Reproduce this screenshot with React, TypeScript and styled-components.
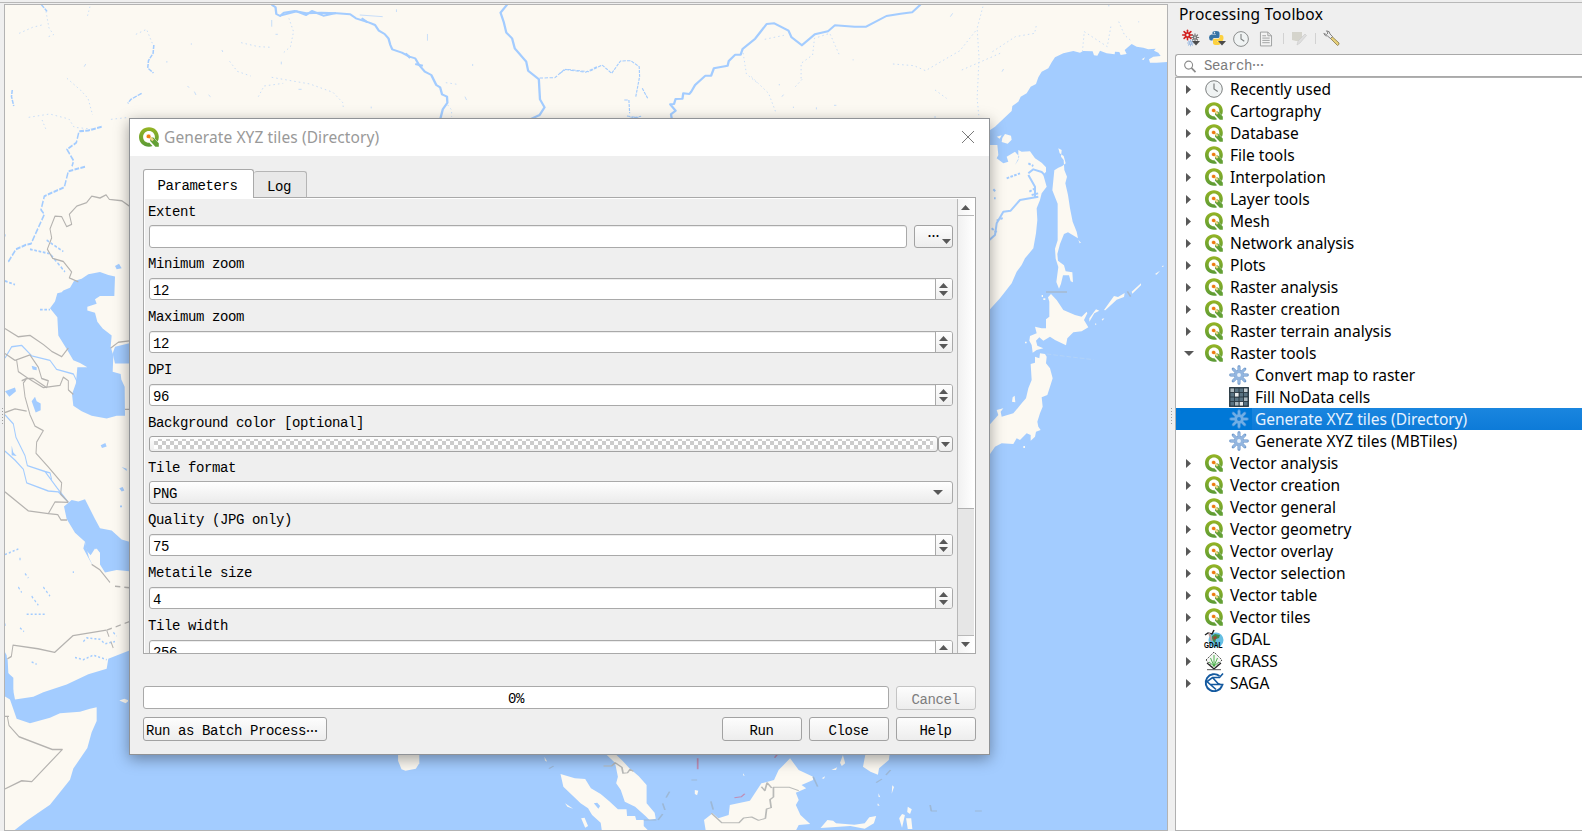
import React from "react";
import styled, { createGlobalStyle } from "styled-components";

const UI = `"Noto Sans", "Open Sans", "Noto Sans CJK SC", sans-serif`;
const MONO = `"Liberation Mono", "Noto Sans CJK SC", monospace`;
const LINE = "#a9a9a9";
const SEA = "#a3ccff";
const LAND = "#fcf9f2";

const Global = createGlobalStyle`
  * { box-sizing: border-box; }
  body { margin: 0; background: #efefef; overflow: hidden; }
  svg { display: block; overflow: visible; }
`;

const Screen = styled.div`
  width: 1582px;
  height: 831px;
  padding-top: 2px;
  overflow: hidden;
  background: #efefef;
  font-family: ${UI};
`;

const Workspace = styled.div`
  display: flex;
  height: 829px;
  border-top: 1px solid #b8b8b8;
`;

const Gutter = styled.div<{ $w: number }>`
  width: ${(p) => p.$w}px;
  flex: none;
  display: flex;
  align-items: center;
  justify-content: center;
  padding-bottom: 2px;
`;

const Grip = styled.div`
  width: 1px;
  height: 16px;
  background: repeating-linear-gradient(#a0a0a0 0 1px, transparent 1px 3px);
`;

const MapCanvas = styled.div`
  width: 1164px;
  height: 827px;
  margin-top: 1px;
  flex: none;
  border: 1px solid #b3b3b3;
  overflow: hidden;
  background: ${LAND};
  & > svg { overflow: hidden; }
`;

/* ---------- Toolbox panel ---------- */

const Toolbox = styled.div`
  flex: 1;
  min-width: 0;
  display: flex;
  flex-direction: column;
`;

const PanelTitle = styled.div`
  height: 24px;
  padding-left: 4px;
  font-size: 15.5px;
  line-height: 23px;
  letter-spacing: 0.22px;
  color: #000;
`;

const ToolRow = styled.div`
  height: 27px;
  display: flex;
  align-items: center;
  padding: 0 0 4px 7px;
`;

const ToolSlot = styled.div<{ $w: number }>`
  width: ${(p) => p.$w}px;
  flex: none;
  display: flex;
`;

const ToolSeparator = styled.div`
  width: 1px;
  height: 11px;
  background: #d2d2d2;
`;

const SearchBox = styled.div`
  height: 23px;
  display: flex;
  align-items: center;
  gap: 8px;
  padding: 1px 0 0 8px;
  border: 1px solid ${LINE};
  border-right: 0;
  border-radius: 3px 0 0 3px;
  background: #fff;
  color: #7c7c7c;
  font: 14px/20px ${MONO};
  letter-spacing: -0.4px;
`;

const Tree = styled.div`
  height: 754px;
  border: 1px solid #b0b0b0;
  border-right: 0;
  background: #fff;
`;

const TreeRow = styled.div<{ $child?: boolean; $selected?: boolean }>`
  height: 22px;
  display: flex;
  align-items: center;
  padding-left: ${(p) => (p.$child ? 53 : 9)}px;
  font-size: 15.5px;
  line-height: 22px;
  white-space: nowrap;
  color: ${(p) => (p.$selected ? "#e6f2ff" : "#000")};
  background: ${(p) =>
    p.$selected ? "linear-gradient(90deg, #0078d7 0 76px, transparent 76px), linear-gradient(#1a86df, #0d7bd8)" : "transparent"};
`;

const Twist = styled.div<{ $open?: boolean }>`
  width: 19px;
  flex: none;
  padding-left: ${(p) => (p.$open ? 0 : 1)}px;
  margin-left: ${(p) => (p.$open ? -1 : 0)}px;
  margin-right: ${(p) => (p.$open ? 1 : 0)}px;
`;

const TreeIcon = styled.div`
  width: 20px;
  margin-right: 6px;
  flex: none;
  display: flex;
  justify-content: center;
`;

/* ---------- Dialog ---------- */

const Dialog = styled.div`
  position: absolute;
  left: 129px;
  top: 118px;
  width: 861px;
  height: 637px;
  border: 1px solid #8f9296;
  background: #efefef;
  box-shadow: 0 4px 14px rgba(0, 0, 0, 0.36);
  font-family: ${MONO};
  font-size: 14px;
  letter-spacing: -0.4px;
  color: #000;
`;

const TitleBar = styled.div`
  height: 37px;
  display: flex;
  align-items: center;
  padding: 0 15px 2px 9px;
  background: #fff;
`;

const DialogTitle = styled.div`
  flex: 1;
  padding-left: 5px;
  font: 15.5px ${UI};
  letter-spacing: 0.1px;
  color: #999;
`;

const Content = styled.div`
  padding: 13px 13px 0;
`;

const Tabs = styled.div`
  display: flex;
  align-items: flex-end;
  height: 29px;
  margin-bottom: -1px;
`;

const Tab = styled.div<{ $active?: boolean }>`
  position: relative;
  width: ${(p) => (p.$active ? 111 : 53)}px;
  height: ${(p) => (p.$active ? 29 : 27)}px;
  padding: 4px 2px 0 0;
  display: flex;
  align-items: center;
  justify-content: center;
  border: 1px solid ${(p) => (p.$active ? LINE : "#b5b5b5")};
  border-bottom: ${(p) => (p.$active ? "0" : `1px solid ${LINE}`)};
  border-left-width: ${(p) => (p.$active ? 1 : 0)}px;
  border-radius: 3px 3px 0 0;
  background: ${(p) => (p.$active ? "#fff" : "#e8e8e8")};
`;

const Pane = styled.div`
  height: 457px;
  display: flex;
  overflow: hidden;
  border: 1px solid ${LINE};
  padding: 1px 0 0 1px;
  background: linear-gradient(#fff 0 1px, transparent 1px), linear-gradient(90deg, #fff 0 1px, #efefef 1px);
`;

const Form = styled.div`
  width: 812px;
  height: 454px;
  overflow: hidden;
  padding: 0 4px;
`;

const Label = styled.div<{ $h: number; $up?: number }>`
  height: ${(p) => p.$h}px;
  display: flex;
  align-items: flex-end;
  padding-bottom: ${(p) => 3 + (p.$up ?? 0)}px;
  margin-left: -1px;
  line-height: 20px;
  white-space: pre;
`;

const Row = styled.div<{ $gap?: number }>`
  display: flex;
  gap: ${(p) => p.$gap ?? 0}px;
`;

const Field = styled.div<{ $h?: number }>`
  flex: 1;
  height: ${(p) => p.$h ?? 22}px;
  display: flex;
  align-items: stretch;
  border: 1px solid ${LINE};
  border-radius: 3px;
  background: #fff;
  box-shadow: inset 0 1px 0 #ededed;
`;

const Value = styled.div`
  flex: 1;
  padding: 2px 0 0 3px;
  line-height: 20px;
`;

const Steps = styled.div`
  width: 17px;
  display: flex;
  flex-direction: column;
  align-items: center;
  justify-content: center;
  gap: 3px;
  padding-right: 1px;
  border-left: 1px solid ${LINE};
  border-radius: 0 2px 2px 0;
  background: linear-gradient(#fefefe, #efefef);
`;

const Button = styled.div<{ $w: number; $h?: number; $disabled?: boolean; $left?: boolean }>`
  width: ${(p) => p.$w}px;
  height: ${(p) => p.$h ?? 24}px;
  flex: none;
  display: flex;
  align-items: center;
  justify-content: ${(p) => (p.$left ? "flex-start" : "center")};
  padding: ${(p) => (p.$left ? "3px 0 0 2px" : "3px 1px 0 0")};
  border: 1px solid ${(p) => (p.$disabled ? "#c4c4c4" : "#a2a2a2")};
  border-radius: 3px;
  background: linear-gradient(#fdfdfd, #ededed);
  color: ${(p) => (p.$disabled ? "#7d7d7d" : "#000")};
  white-space: pre;
`;

const MoreButton = styled(Button)`
  align-items: flex-end;
  justify-content: flex-end;
  padding: 0 1px 3px 0;
`;

const MoreDots = styled.span`
  font: bold 12px/22px "Noto Sans CJK SC", sans-serif;
  height: 19px;
  margin-right: 3px;
`;

const ColorButton = styled(Button)`
  flex: 1;
  padding: 0 4px;
`;

const Checker = styled.div`
  width: 100%;
  height: 10px;
  background: repeating-conic-gradient(#ccc 0 25%, #fff 0 50%) 0 -2px / 8px 8px;
`;

const ArrowButton = styled(Button)`
  padding: 0;
`;

const Combo = styled.div`
  height: 23px;
  display: flex;
  align-items: center;
  padding-right: 9px;
  border: 1px solid ${LINE};
  border-radius: 3px;
  background: linear-gradient(#fefefe, #ebebeb);
`;

const ScrollBar = styled.div`
  width: 18px;
  height: 454px;
  display: flex;
  flex-direction: column;
  border-left: 1px solid #b8b8b8;
  border-right: 1px solid #fff;
  background: #e6e6e6;
`;

const ScrollEnd = styled.div<{ $down?: boolean }>`
  height: ${(p) => (p.$down ? 18 : 17)}px;
  display: flex;
  align-items: center;
  justify-content: center;
  padding-right: 2px;
  border: 0 solid #b8b8b8;
  border-width: ${(p) => (p.$down ? "1px 0 0" : "0 0 1px")};
  background: linear-gradient(90deg, #f4f4f4, #fff);
`;

const Thumb = styled.div`
  height: 293px;
  margin-bottom: 126px;
  border-bottom: 1px solid #b0b0b0;
  background: linear-gradient(90deg, #f1f1f1, #fff);
`;

const Actions = styled.div<{ $top: number }>`
  display: flex;
  gap: 7px;
  margin-top: ${(p) => p.$top}px;
  height: 24px;
`;

const Progress = styled.div`
  flex: 1;
  height: 23px;
  display: flex;
  align-items: center;
  justify-content: center;
  padding-top: 2px;
  border: 1px solid ${LINE};
  border-radius: 3px;
  background: #fff;
`;

const Spacer = styled.div`
  flex: 1;
`;

const Dots = styled.span`
  font: bold 12px/16px "Noto Sans CJK SC", sans-serif;
`;
const Ellipsis = () => <Dots lang="zh-CN">…</Dots>;

/* ---------- Icons ---------- */

const Triangle = ({ dir, w = 9, h = 5 }: { dir: "up" | "down" | "right"; w?: number; h?: number }) => (
  <svg width={w} height={h} viewBox="0 0 10 10" preserveAspectRatio="none">
    <path fill="#585858" d={dir === "up" ? "M5 0L10 10H0Z" : dir === "down" ? "M0 0H10L5 10Z" : "M0 0L10 5L0 10Z"} />
  </svg>
);

const QgisIcon = ({ size = 18 }: { size?: number }) => (
  <svg width={size} height={size} viewBox="0 0 20 20">
    <defs>
      <linearGradient id="qg" x1="0" y1="0" x2="0" y2="1">
        <stop offset="0" stopColor="#95b424" />
        <stop offset="1" stopColor="#5a9a36" />
      </linearGradient>
    </defs>
    <path
      fill="url(#qg)"
      d="M10 0.2C4.3 0.2 0 4.4 0 10s4.300 9.700 10 9.700c1.300 0 2.500-.2 3.500-.6L10.400 15.800C6.700 16 4.100 13.500 4.100 10c0-3.500 2.500-6.100 5.900-6.100s5.900 2.600 5.900 6.100c0 .6-.1 1.100-.2 1.600l2.900 2.900c.8-1.300 1.200-2.800 1.200-4.500C19.800 4.400 15.700 .2 10 .2Z"
    />
    <path fill="#63a035" d="M11.200 10.600h3.200l5.400 5.600v3.600h-3.400l-5.200-5.700Z" />
    <path fill="#f2d48a" d="M7.500 7.500h4v1.800l3.500 3.300-1.700 1.700-3.500-3.400H7.500Z" />
    <circle cx="9.600" cy="9.400" r="1.900" fill="#ee7913" />
  </svg>
);

const ClockIcon = ({ size = 18 }: { size?: number }) => (
  <svg width={size} height={size} viewBox="0 0 18 18" fill="none" stroke="#7d8080">
    <circle cx="9" cy="9" r="8.300" fill="#f0f3f3" />
    <path d="M9 3.500V9l3.700 2.500" strokeWidth="1.200" />
  </svg>
);

const Cog = ({ cx, cy, r, color, hole }: { cx: number; cy: number; r: number; color: string; hole: string }) => (
  <g transform={`translate(${cx} ${cy}) scale(${r / 9})`}>
    {[0, 45, 90, 135].map((a) => (
      <path key={a} d="M0 -9V9" stroke={color} strokeWidth="3" strokeLinecap="round" transform={`rotate(${a})`} />
    ))}
    <circle r="5.300" fill={color} />
    <circle r="2.300" fill={hole} />
  </g>
);

const GearIcon = ({ selected }: { selected?: boolean }) => (
  <svg width="18" height="18" viewBox="0 0 18 18">
    <Cog cx={9} cy={9} r={8.4} color={selected ? "#3f8ed8" : "#6792c6"} hole={selected ? "#0d7bd8" : "#fff"} />
    <Cog cx={9} cy={9} r={7.6} color={selected ? "#70aee6" : "#92b5df"} hole={selected ? "#1a80d8" : "#e9f1fa"} />
  </svg>
);

const GridIcon = () => (
  <svg width="20" height="20" viewBox="0 0 20 20">
    <rect width="20" height="20" fill="#42515b" />
    <g stroke="#22313b" strokeWidth="0.800">
      <path fill="#5a7382" d="M1 1h18v18H1zM5.500 1v18M10 1v18M14.500 1v18M1 5.500h18M1 10h18M1 14.500h18" />
      <path fill="#c6ced2" d="M14.500 1H19v4.500h-4.500z" />
      <path fill="#e9eced" d="M5.500 5.500H10V10H5.500zM10 14.500h4.500V19H10z" />
      <path fill="#a9b6bd" d="M1 1h4.500v4.500H1zM5.500 14.500H10V19H5.500zM14.500 10H19v4.500h-4.500z" />
    </g>
  </svg>
);

const GdalIcon = () => (
  <svg width="20" height="20" viewBox="0 0 20 20">
    <circle cx="12" cy="11" r="7.500" fill="#66bfe3" />
    <path d="M8 7l3-2 5 1-1 3-3 1-1 4-3-3Z" fill="#3f8c4e" />
    <path d="M9 8l3-1 1 2-3 2Z" fill="#9a4a33" />
    <path d="M1 6l3-2 4 1L10 1" fill="none" stroke="#222" strokeWidth="1.500" />
    <path d="M5 4l3 8" stroke="#b9a0a0" strokeWidth="2" />
    <text x="0" y="19" fontFamily="Liberation Sans" fontSize="8.500" fontWeight="bold" textLength="18.500" lengthAdjust="spacingAndGlyphs" fill="#000">
      GDAL
    </text>
  </svg>
);

const GrassIcon = () => (
  <svg width="18" height="20" viewBox="0 0 18 20" fill="none">
    <path d="M1 9L9 1l8 8-8 9Z" fill="#f4f6f2" stroke="#444" strokeDasharray="1.500 1" />
    <path d="M2 12l7 6 7-6" stroke="#222" strokeWidth="1.200" />
    <path d="M9 16V4M9 15L5.500 7M9 15l3.500-8M9 15l-5-4M9 15l5-4" stroke="#3daa3d" strokeWidth="0.900" />
    <path d="M2 18.700h14" stroke="#555" />
  </svg>
);

const SagaIcon = () => (
  <svg width="20" height="20" viewBox="0 0 20 20" fill="none" stroke="#13599f" strokeWidth="1.900">
    <path d="M15.500 3A8.500 8.500 0 1 0 18 13" />
    <path d="M19 .500L15.500 4.500H8.500L3 8.500 12 16.500M8.500 4.500L14 10.500M6.500 11.500H19.500M14 10.500L19 12.500" strokeWidth="1.600" />
  </svg>
);

const ModelIcon = () => (
  <svg width="18" height="17" viewBox="0 0 18 17">
    <Cog cx={5.5} cy={5} r={4.8} color="#d2201f" hole="#efefef" />
    <Cog cx={13} cy={7.5} r={3.6} color="#777" hole="#ddd" />
    <Cog cx={8.5} cy={13} r={3} color="#9dbbe2" hole="#d5e2f3" />
    <path d="M10 11h8l-4 4.500Z" fill="#4c4c4c" />
  </svg>
);

const PythonIcon = () => (
  <svg width="18" height="17" viewBox="0 0 18 17">
    <path d="M3.500 4V2.500Q3.500 1 7 1t3.500 2v3.500Q10.500 8 9 8H5Q3.500 8 3.500 10.500H2Q0 10 0 7.500T2.500 4.600H7V4Z" fill="#3673a5" />
    <path d="M11 5h1.500Q14.500 5 14.500 8T12 11.500H8v.5h3.500v1.500Q11 15 7.500 15T4 13v-3.500Q4 8.700 5.500 8.700h4Q11 8 11 6.500Z" fill="#fcd140" />
    <circle cx="5.500" cy="2.700" r=".7" fill="#fff" />
    <path d="M9 11h8l-4 4.500Z" fill="#4c4c4c" />
  </svg>
);

const PageIcon = () => (
  <svg width="12" height="16" viewBox="0 0 13 16" fill="#f3f3f3" stroke="#9a9c9c">
    <path d="M.5.500h8l4 4v11H.5Z" />
    <path d="M8.500.500v4h4M2.500 4.500h4M2.500 7h8M2.500 9.500h8M2.500 12h8" fill="none" />
  </svg>
);

const EditIcon = () => (
  <svg width="16" height="16" viewBox="0 0 16 16">
    <path d="M1 1h10v9H5l-4-1Z" fill="#d5d4cc" />
    <path d="M6 14l1-4 7-7 1.500 1.500L9 12Z" fill="#dedede" stroke="#cacaca" strokeWidth=".6" />
  </svg>
);

const WrenchIcon = () => (
  <svg width="17" height="17" viewBox="0 0 17 17">
    <path d="M7 8L9 6.500l7 6.500q.6 1.500-1.500 2.500Z" fill="#e8d17a" stroke="#85784a" strokeWidth=".8" />
    <path d="M.8 3.500Q2 6.500 4.500 6l3 2.500L9.500 6.500 7 4Q7 1 3.500.800L5 3 3.500 4.500Z" fill="#ececec" stroke="#777" strokeWidth=".9" />
  </svg>
);

/* ---------- Map drawing ---------- */

const MapDrawing = () => (
  <svg width="1162" height="825" viewBox="5 5 1162 825" fill="none" strokeLinejoin="round">
    <rect x="5" y="5" width="1162" height="825" fill={LAND} />

    {/* Northern rivers */}
    <g transform="scale(.3827 .33333)" stroke={SEA} strokeWidth="4">
      <path d="M710 14L720 22 722 42 732 48 742 38 770 33 800 40 840 38 880 40 915 43 930 55 965 68 980 75 990 92 1005 102 1015 115 1020 135 1025 148 1050 158 1070 170 1085 175 1095 195 1110 215 1127 225 1140 255 1150 262 1155 283 1168 290 1169 308 1157 328 1151 355" strokeWidth="6" />
      <path d="M735 46l40-12 25 11 15-12 30 14 33-8M945 55l15 12M1060 160l12 14M1085 192l20 5" strokeWidth="6" />
      <path d="M1325 14L1308 38 1316 65 1323 98 1338 115 1345 145 1375 185 1380 212 1408 238 1411 298 1423 322 1410 345 1385 358" strokeWidth="6" />
      <path d="M108 14l15 20M402 135l-2 25-12 22-2 22 15 15M370 280l-28 18-8 12M32 270l-2 20 6 28" strokeDasharray="12 3" />
      <path d="M1410 234L1450 233 1475 208 1530 217 1560 200" strokeDasharray="9 4" strokeWidth="3" />
      <g strokeWidth="2.500" strokeDasharray="4 8" opacity=".65">
        <path d="M120 34l8 50 12 20-18 8M50 100l35-18 28-8M355 103l28-15 15 42M630 128l45 12 35 2M755 55l12 40-8 45-20 20M600 184l20 30 35 14M675 290l15-32 50-8M710 232l100 20 60 25 25 30 3 20M175 235l35 35 20 25 12 50M75 352l55-10 50 15 14 25 45 5M110 360l10 28M290 358l40-5M235 20l-8 35M1165 248l30 5M1170 315l10 15v20" />
        <path d="M490 258l4 5M508 275l4 10M580 150l2 6M710 60v20M780 268h8M720 103h6M735 185v8M970 320v5M1117 102v20M1215 290l4 10M1235 192v6M545 285l5 5M940 45l60 5M1036 28v8M500 130v4M436 183v5M220 200l4-8" strokeDasharray="none" />
      </g>
    </g>
    <g transform="translate(560 0) scale(.3827 .33333)" stroke={SEA} strokeWidth="4">
      <path d="M942 14L920 37 890 41 853 48 800 80 770 80 718 76 700 94 666 103 632 136 605 112 597 92 560 70 540 72 510 116 477 147 472 164 458 164 441 183 438 197 402 205 395 227 380 227 353 255 343 275 338 282 322 280 320 296 302 297 298 312 288 313 302 332 290 343 292 356" strokeWidth="6" />
      <path d="M0 220L15 208 75 215 110 195 135 220 158 183 185 182 207 200 208 230 198 290M182 355l30-6M215 265l15 32M168 300h12l2 40M175 348l30 5" strokeDasharray="9 3" strokeWidth="3" />
      <g strokeWidth="2.500" strokeDasharray="4 8" opacity=".65">
        <path d="M535 118l50-12M477 147l10 75 30 28M630 235v-45l30-25 5-50 40-15 25 65M870 192l55 5 30 15 90-60 45-65M1105 20l-15 65 5 90-5 120 5 60M1130 155l60-45 50-10 5-25M1050 210l100-50M1365 155l5-60 60 45 10-65M1460 65l15 40 20 20M500 230l45 50 20 60M615 260l20-25M980 270l30 25" />
        <path d="M573 252v4M580 290l4-6M716 316h6M980 348v8M1155 215l4-8M610 320v4M670 322v6M766 178v3M1020 50l6-10M1434 14v5M1512 64v3" strokeDasharray="none" />
      </g>
    </g>

    {/* Middle East and the Arabian Sea */}
    <g transform="translate(0 120) scale(.33333 .45351)">
      <g fill={SEA}>
        <path d="M150 415L165 400 172 382 185 380 190 376 210 370 222 355 245 350 265 340 300 335 325 342 345 345 343 388 300 388 285 395 290 405 262 412 262 420 285 425 292 445 308 460 335 475 332 500 340 520 338 555 362 560 364 572 374 588 375 652 350 652 320 658 275 652 245 642 220 630 216 605 228 580 232 545 262 545 240 536 220 530 200 505 175 475 172 435Z" />
        <path d="M345 500L388 492V537L345 537 338 515Z" />
        <path d="M192 852L215 838 235 841 255 836 285 880 300 900 335 905 365 925 388 930V995L350 992 315 998 300 980 300 955 285 945 272 960 260 950 255 930 225 910 200 880Z" />
        <path d="M388 1170L325 1188 320 1210 265 1222 200 1245 130 1262 100 1272 45 1278 35 1240 22 1215 20 1180 12 1170V1270L30 1278 50 1320 90 1330 150 1318 180 1308 240 1305 270 1298 290 1295 290 1325 275 1350 262 1385 220 1430 210 1455 150 1510 80 1545 40 1568H430V1170Z" />
        <path d="M95 620l10-10 5 10 12 5v15l-15 5ZM15 598l30-8 3 8-20 12ZM345 322l12-5 8 10-15 2ZM302 717l14-5 4 8-14 3ZM358 812l10-3 5 8-8 2ZM365 765l15 4v5ZM35 718l5 15 10 8-15-2ZM95 542l15 3v7l-12-2ZM15 1180l8 10 2 30 15 10v30l-10 5-15-15ZM255 930l12 35 13 20-15-20-15-20Z" />
      </g>
      <path d="M276 958L290 945 300 955 300 980 285 988 276 975ZM358 1280l15-4 14 4-10 6Z" fill={LAND} />
      <g stroke={SEA} strokeWidth="4.500">
        <path d="M305 15l-40 8-28 2-8 25-28 15 20 25-5 12M255 103l-50 10-12 35-60 20-10 30 10 10-40 65-15 2-30 10-25 30" strokeDasharray="14 4" />
        <path d="M90 285l60 10 45 40M140 265l50 25M15 355l30 8M120 418h30" strokeDasharray="8 5" strokeWidth="4" />
        <path d="M15 650L40 670 48 700 75 740 82 762 135 775 172 812 205 843M15 730L45 750 70 770 80 800 145 818 175 820 205 843M15 525L35 500 65 497 95 520 150 530 170 550 220 560 232 578M135 775l15 3 5 15" strokeWidth="3" />
        <path d="M95 1195l15 5M220 995v4M60 965v8M15 958l40-12M75 1000l10 10M55 1030l10 12M95 1050l20 20M130 1030l20 20M80 1090h60M15 1110v8M60 1120l12 8M250 1150l10-8 40 3 15 10 30-5M225 1185l25 5 30-10 40 10M340 1130l10 8M360 852h10M15 252v5" strokeDasharray="6 6" strokeWidth="3.500" />
      </g>
      <g stroke="#b5b3b0" strokeWidth="3">
        <path d="M388 190L365 178 328 175 318 165 300 172 275 168 260 182 230 190 208 208 215 230 200 235 185 213 165 212 150 240 155 260 142 285 158 305 190 312 215 335 208 348 235 357M332 503L355 490 388 487M375 638h13" />
        <path d="M15 460L55 478 90 475 130 495 155 510 185 522 205 503M15 515L45 530 90 518 115 545 125 570 145 575 140 590 100 570 80 570M50 530l5 25 30 15 45 20 50-5 10-18 15 8v20l15 10" />
        <path d="M65 575L80 570 70 580 75 610 90 650 105 675 130 685 110 710 108 735 145 765 185 800 182 825 205 843M15 645l30-8 35 5M15 820L85 862 145 868 165 842 205 843M145 868l28 2 10 12 18 0" />
        <path d="M275 980l25 12 30 28M22 1188l12-5 5-25 75 8 50 8 55-37 100-12M22 1315l5 20 30 25 100 28 30 0-92 71-30-2-50 18M15 1315h12" />
        <path d="M345 1028l50 4M320 1125l68-19M320 1125l25 50" strokeDasharray="16 12" />
      </g>
    </g>

    {/* Southern sea and islands */}
    <rect x="128" y="700" width="1040" height="131" fill={SEA} />
    <g transform="translate(130 740) scale(.574 .33333)">
      <g fill={LAND}>
        <path d="M467 36V62L473 88 480 92 498 86 504 70V36Z" />
        <path d="M825 36L845 68 850 110 847 130 855 150 862 185 880 200 898 228 905 240 916 236 914 218 900 190V135L886 108 870 85 858 62 842 36Z" />
        <path d="M750 102L775 115 793 117 803 145 820 162 835 184 850 208 865 208 866 228 880 228 882 240 895 240 895 258 903 272H822L820 248 805 225 798 205 785 190 770 165 755 140ZM808 190l8 16 3-8-5-10Z" fillRule="evenodd" />
        <path d="M1003 272L1000 240 1015 220 1025 235 1043 225 1045 195 1080 182 1100 130 1122 120 1130 90 1150 55 1165 90 1190 110 1190 120 1170 135 1178 145 1160 158 1165 180 1160 195 1168 225 1185 252 1165 255 1160 272Z" />
        <path d="M1282 36L1277 80 1290 95 1303 104 1305 85 1322 60 1324 36Z" />
        <path d="M1203 264L1215 240 1225 242 1230 250 1262 254 1280 250 1288 232 1300 228 1296 250 1280 266 1255 258Z" />
        <path d="M722 50l5 15-4-3ZM1242 45l4 25-6 8-3-10ZM758 190l14 16-10-6ZM786 235l6-2 6 25-5 5ZM984 150l6 2-2 14-4-4ZM1328 136l3 5-4 20ZM1355 200l7 8-3 14-5-6ZM1345 222l5 3-5 38-5-28ZM1352 235h9l2 32h-8ZM1304 160l3 12-3-2ZM1222 90l10-8-2 8ZM1303 190l3 8-4-2ZM1068 100l3 8-3-2ZM1205 115l6-6-2 7Z" />
      </g>
      <g stroke="#b9bab8" strokeWidth="3">
        <path d="M825 78h14l6-10 12 14 2 18 8-2 4-10 6 6M1013 220l18 28 30 0 8-14 14-3 12 10 12-6 2-28 8-4-2-24 6-8V142h28l16 10M1100 140l6 12 4-24 8 16" />
        <path d="M940 155l-6 18M928 190l4 20M928 222l-8 18M895 240h22M1012 184l4 25M978 120h10M1325 90l-8 15M1310 117l-10 11M1394 195l2 18h10M1472 213h12M738 78l-8 8M1190 110l8 30" stroke="#9db8d6" />
      </g>
      <path d="M989 55v33M1130 38l-7 15M1053 173l12-3 6-9" stroke="#bf8fb7" strokeWidth="3" />
    </g>

    {/* Okhotsk Sea, Pacific, Sakhalin and Japan */}
    <g transform="translate(980 0) scale(.33333)">
      <path
        fill={SEA}
        d="M564 186L530 188 510 188 507 178 520 170 542 168 535 158 522 152 527 146 505 148 490 143 470 140 455 132 440 145 434 150 440 162 422 165 418 156 405 155 404 163 380 160 360 152 352 167 342 166 338 154 310 153 300 158 280 153 250 160 225 172 215 187 205 205 185 215 175 232 168 252 152 260 140 280 122 290 115 305 97 318 95 333 75 352 45 380 0 410V435H52L55 465 50 475 70 490 85 485 80 470 105 455 118 470 105 495 115 480 115 450 125 455 150 454 165 475 185 488 198 502 198 515 190 525 200 560 185 580 180 600 170 625 172 660 168 700 160 745 135 775 125 795 110 815 95 850 60 895 28 930 0 950V2200H564Z"
      />
      <g fill={LAND}>
        <path d="M75 402l18 5 2 12-12 12-18-5 2-12ZM50 410l15-4-6 10ZM235 445l10 5-2 20 8 10 2 30 8 20-5 20 8 35 6 40 8 40 12 30 4 20-30-18-12 5-12 30-8 30 2 20 18 14 5 18 20 3 2 30-7-3-5-18-18 0-6 25-6 15-8-20 6-45-8-25-2-30 8-25v-110l-16-40 6-60 12-8 12-5 10-8-6-22-12-8Z" />
        <path d="M213 882L230 900 250 930 285 945 305 950 320 935 322 940 312 960 325 982 305 994 280 997 262 1015 258 1036 225 1020 210 1010 190 1022 178 1012 168 1022 172 1037 190 1045 170 1050 158 1058 155 1035 148 1022 150 1008 170 1000 165 980 185 985 198 985 198 958 208 950 208 905 204 892Z" />
        <path d="M165 1070L178 1075 180 1060 195 1062 200 1070 198 1090 210 1105 218 1135 210 1160 202 1185 185 1192 188 1220 180 1240 172 1265 175 1280 182 1290 168 1295 165 1310 152 1322 152 1305 140 1300 120 1320 110 1315 100 1332 65 1330 45 1340 28 1365 0 1380V1300L28 1275 55 1245 50 1230 70 1225 62 1235 65 1250 100 1240 125 1210 138 1195 145 1165 155 1140 152 1092 165 1088Z" />
        <path d="M98 1192l6-5 2 20-10-2ZM135 1025h5v5h-5ZM328 955l20-27 10 4-15 8-15 25ZM372 930l30-42 12 3 20-12-2 12-22 8-34 32ZM455 875l28-25v6l-26 25ZM525 822l15-10-10 12ZM545 800l5-4v5ZM365 957l8-2-5 7ZM185 885h4v6h-4ZM345 970l5 2-4 4ZM485 178l10-6-4 8ZM295 720l8 8-4 2ZM190 895h6v5h-6ZM130 1338h5v6h-5Z" />
      </g>
      <path d="M28 720L45 705 50 670 70 635 92 632 120 600 175 590M145 525l20 35v30M145 520l15-12 25 8 15 15" stroke={SEA} strokeWidth="6" />
      <path d="M80 535l40-15M40 568l8 8M42 595h5M145 490l15 8M148 575l18-10M155 585l20-5M50 662l18-8M35 685l15 12" stroke={SEA} strokeWidth="6" strokeDasharray="8 4" />
      <path d="M198 876h63M442 874l10 16" stroke="#a6b9cf" strokeWidth="5" />
      <path d="M200 1062l140 17" stroke="#b8d4f5" strokeWidth="2" strokeDasharray="14 6" />
    </g>
  </svg>
);

/* ---------- Composition ---------- */

const SpinBox = ({ value }: { value: string }) => (
  <Field>
    <Value>{value}</Value>
    <Steps>
      <Triangle dir="up" />
      <Triangle dir="down" />
    </Steps>
  </Field>
);

const before = [
  "Cartography", "Database", "File tools", "Interpolation", "Layer tools", "Mesh", "Network analysis",
  "Plots", "Raster analysis", "Raster creation", "Raster terrain analysis",
];
const after = [
  "Vector analysis", "Vector creation", "Vector general", "Vector geometry", "Vector overlay",
  "Vector selection", "Vector table", "Vector tiles",
];

const Group = ({ name, icon, open }: { name: string; icon?: React.ReactNode; open?: boolean }) => (
  <TreeRow>
    <Twist $open={open}>
      {open ? <Triangle dir="down" w={10} h={5} /> : <Triangle dir="right" w={5} h={9} />}
    </Twist>
    <TreeIcon>{icon ?? <QgisIcon />}</TreeIcon>
    {name}
  </TreeRow>
);

const Algorithm = ({ name, icon, selected }: { name: string; icon?: React.ReactNode; selected?: boolean }) => (
  <TreeRow $child $selected={selected}>
    <TreeIcon>{icon ?? <GearIcon selected={selected} />}</TreeIcon>
    {name}
  </TreeRow>
);

export default function App() {
  return (
    <Screen>
      <Global />
      <Workspace>
        <Gutter $w={4}><Grip /></Gutter>
        <MapCanvas><MapDrawing /></MapCanvas>
        <Gutter $w={7}><Grip /></Gutter>
        <Toolbox>
          <PanelTitle>Processing Toolbox</PanelTitle>
          <ToolRow>
            <ToolSlot $w={27}><ModelIcon /></ToolSlot>
            <ToolSlot $w={24}><PythonIcon /></ToolSlot>
            <ToolSlot $w={27}><ClockIcon size={16} /></ToolSlot>
            <ToolSlot $w={23}><PageIcon /></ToolSlot>
            <ToolSlot $w={8}><ToolSeparator /></ToolSlot>
            <ToolSlot $w={24}><EditIcon /></ToolSlot>
            <ToolSlot $w={8}><ToolSeparator /></ToolSlot>
            <WrenchIcon />
          </ToolRow>
          <SearchBox>
            <svg width="12" height="13" viewBox="0 0 13 13" fill="none" stroke="#8b8b8b" strokeWidth="1.200">
              <circle cx="5" cy="5" r="4.300" />
              <path d="M8 8l4.500 4.500" strokeWidth="1.800" />
            </svg>
            <span>Search<Ellipsis /></span>
          </SearchBox>
          <Tree>
            <Group name="Recently used" icon={<ClockIcon />} />
            {before.map((n) => <Group key={n} name={n} />)}
            <Group name="Raster tools" open />
            <Algorithm name="Convert map to raster" />
            <Algorithm name="Fill NoData cells" icon={<GridIcon />} />
            <Algorithm name="Generate XYZ tiles (Directory)" selected />
            <Algorithm name="Generate XYZ tiles (MBTiles)" />
            {after.map((n) => <Group key={n} name={n} />)}
            <Group name="GDAL" icon={<GdalIcon />} />
            <Group name="GRASS" icon={<GrassIcon />} />
            <Group name="SAGA" icon={<SagaIcon />} />
          </Tree>
        </Toolbox>
      </Workspace>

      <Dialog>
        <TitleBar>
          <QgisIcon size={20} />
          <DialogTitle>Generate XYZ tiles (Directory)</DialogTitle>
          <svg width="12" height="12" viewBox="0 0 12 12" stroke="#7a7a7a" strokeWidth="1">
            <path d="M0 0L12 12M12 0L0 12" />
          </svg>
        </TitleBar>
        <Content>
          <Tabs>
            <Tab $active>Parameters</Tab>
            <Tab>Log</Tab>
          </Tabs>
          <Pane>
            <Form>
              <Label $h={26}>Extent</Label>
              <Row $gap={7}>
                <Field $h={23} />
                <MoreButton $w={39} $h={23}>
                  <MoreDots lang="zh-CN">…</MoreDots>
                  <Triangle dir="down" />
                </MoreButton>
              </Row>
              <Label $h={30} $up={1}>Minimum zoom</Label>
              <SpinBox value="12" />
              <Label $h={31} $up={1}>Maximum zoom</Label>
              <SpinBox value="12" />
              <Label $h={31} $up={1}>DPI</Label>
              <SpinBox value="96" />
              <Label $h={30}>Background color [optional]</Label>
              <Row>
                <ColorButton $w={789} $h={16}><Checker /></ColorButton>
                <ArrowButton $w={15} $h={16}><Triangle dir="down" /></ArrowButton>
              </Row>
              <Label $h={29}>Tile format</Label>
              <Combo>
                <Value>PNG</Value>
                <Triangle dir="down" w={10} />
              </Combo>
              <Label $h={30} $up={1}>Quality (JPG only)</Label>
              <SpinBox value="75" />
              <Label $h={31} $up={1}>Metatile size</Label>
              <SpinBox value="4" />
              <Label $h={31} $up={1}>Tile width</Label>
              <SpinBox value="256" />
            </Form>
            <ScrollBar>
              <ScrollEnd><Triangle dir="up" /></ScrollEnd>
              <Thumb />
              <ScrollEnd $down><Triangle dir="down" /></ScrollEnd>
            </ScrollBar>
          </Pane>
          <Actions $top={32}>
            <Progress>0%</Progress>
            <Button $w={80} $disabled>Cancel</Button>
          </Actions>
          <Actions $top={7}>
            <Button $w={184} $left>Run as Batch Process<Ellipsis /></Button>
            <Spacer />
            <Button $w={80}>Run</Button>
            <Button $w={80}>Close</Button>
            <Button $w={80}>Help</Button>
          </Actions>
        </Content>
      </Dialog>
    </Screen>
  );
}
